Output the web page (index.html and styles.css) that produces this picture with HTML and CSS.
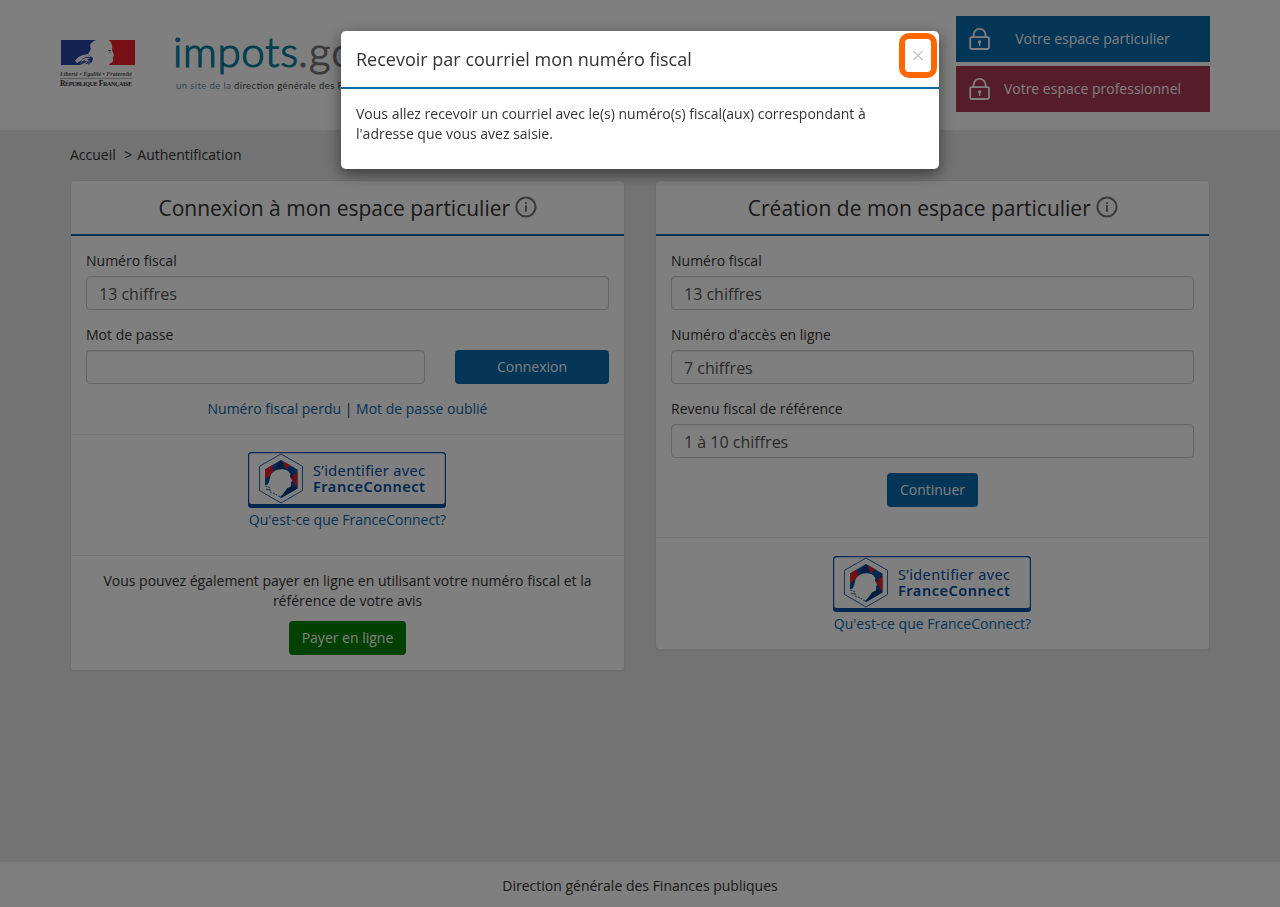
FILE: index.html
```html
<!DOCTYPE html>
<html lang="fr">
<head>
<meta charset="utf-8">
<title>Authentification</title>
<link rel="stylesheet" href="styles.css">
</head>
<body>
<svg class="defs" width="0" height="0">
  <symbol id="lock" viewBox="0 0 22 24">
    <rect x="1.200" y="10.200" width="18.800" height="11.800" rx="1.400" fill="none" stroke="#fff" stroke-width="1.800"/>
    <path d="M4.600 10V7.800a6 6 0 0 1 12 0v2.200" fill="none" stroke="#fff" stroke-width="1.800"/>
    <circle cx="10.600" cy="15" r="1.700" fill="#fff"/><path d="M10.600 15v4" stroke="#fff" stroke-width="1.400"/>
  </symbol>
  <symbol id="info" viewBox="0 0 22 22">
    <circle cx="11" cy="11" r="9.600" fill="none" stroke="#777" stroke-width="2"/>
    <path d="M11 9.300v6.400M11 6.200v1.700" stroke="#777" stroke-width="2"/>
  </symbol>
  <symbol id="fc" viewBox="0 0 198 56">
    <rect width="198" height="56" rx="3.500" fill="#034ea2"/>
    <rect x="1.200" y="1.200" width="195.600" height="50.800" rx="2.500" fill="#fff"/>
    <path d="M33 2L54.500 14.300V38.500L33 51 11.500 38.500V14.300Z" fill="#fff" stroke="#2a65ad" stroke-width="1"/>
    <path d="M33 8L49.500 17.500V36.500L33 46 28 43 17 34V17.500Z" fill="#034ea2"/>
    <path d="M33 8L27 18 37 18Z" fill="#003a80"/>
    <path d="M24 13.200L17 17.500V27L26 21Z" fill="#e1202a"/>
    <path d="M34 9L42.500 13.500 38 17Z" fill="#e1202a"/>
    <path d="M49.500 20V36L42 25Z" fill="#e1202a"/>
    <path d="M44 34L49.500 36.500 33 46 33 39Z" fill="#003a80"/>
    <path d="M26 19.500C29 17 36 16.500 40 19L42.500 22 42 25 44.500 29 43 30 43 34C42 36 39 35 38 38L35 42 31 46 16 38 16 33.500C21 33 21 30 22 26 22 23 24 21 26 19.500Z" fill="#fff"/>
    <path d="M42 20l2 2-1 1.500 3 2" fill="none" stroke="#003a80" stroke-width="1.300"/>
    <path d="M17.500 34l5 2M18 37l2 1 3 0M22 40l2 1M25 41l4 2M30 44l3 1" stroke="#5a88bf" stroke-width="1.300" stroke-dasharray="2 1"/>
    <text x="65" y="23.800" class="fc-text" textLength="112">S’identifier avec</text>
    <text x="65" y="40.200" class="fc-text fc-strong" textLength="112">FranceConnect</text>
  </symbol>
</svg>

<header class="header">
  <div class="container header-row">
    <svg class="logo" width="400" height="60" viewBox="0 0 400 60">
      <path d="M1 5h37v25H1Z" fill="#2b46a5"/>
      <path d="M49 5h26v25H49Z" fill="#ec202b"/>
      <path d="M36 5C31 7 29 10 31 14L28 19 33 23 32 27 27 30H49C50 27 53 28 53 26L53 22 54 20 52 15C53 10 51 6 48 5Z" fill="#fff"/>
      <path d="M15 26C18 21 23 20 28 19L31 22 25 22 31 24 27 24 30 27 24 26 20 29 22 25 17 28ZM20 30L26 27 32 30Z" fill="#fff"/>
      <path d="M22 24l5-2M20 28l5-3M25 28l4 1" stroke="#2b46a5" stroke-width=".8"/>
      <path d="M48 15.500h3M49 17h1.500" stroke="#555" stroke-width=".8"/>
      <text x="0" y="41" class="motto" textLength="72">Liberté • Égalité • Fraternité</text>
      <path d="M0 43.500h72" stroke="#999" stroke-width=".7"/>
      <text x="0" y="51" class="republic" textLength="72">R<tspan font-size="6">ÉPUBLIQUE</tspan> F<tspan font-size="6">RANÇAISE</tspan></text>
      <text x="113" y="32" class="brand" textLength="125">impots</text>
      <text x="238" y="32" class="brand brand-gov" textLength="145">.gouv.fr</text>
      <text x="116" y="54" class="tagline tagline-light" textLength="55">un site de la</text>
      <text x="174" y="54" class="tagline" textLength="190">direction générale des Finances publiques</text>
    </svg>
    <nav class="spaces">
      <a class="space space-part"><svg class="lock"><use href="#lock"/></svg><span>Votre espace particulier</span></a>
      <a class="space space-pro"><svg class="lock"><use href="#lock"/></svg><span>Votre espace professionnel</span></a>
    </nav>
  </div>
</header>

<main class="container main">
  <div class="crumbs"><span>Accueil</span><span class="crumb-sep">&gt;</span><span>Authentification</span></div>
  <div class="columns">
    <section class="panel">
      <h2 class="panel-title">Connexion à mon espace particulier <svg class="info info-near"><use href="#info"/></svg></h2>
      <div class="panel-body">
        <label class="label">Numéro fiscal</label>
        <input class="field" placeholder="13 chiffres">
        <label class="label">Mot de passe</label>
        <div class="password-row"><input class="field" type="password"><button class="btn">Connexion</button></div>
        <p class="links"><a>Numéro fiscal perdu</a> | <a>Mot de passe oublié</a></p>
      </div>
      <div class="connect">
        <svg class="fc"><use href="#fc"/></svg>
        <a>Qu'est-ce que FranceConnect?</a>
      </div>
      <div class="pay">
        <p>Vous pouvez également payer en ligne en utilisant votre numéro fiscal et la référence de votre avis</p>
        <button class="btn btn-pay">Payer en ligne</button>
      </div>
    </section>
    <section class="panel">
      <h2 class="panel-title">Création de mon espace particulier <svg class="info"><use href="#info"/></svg></h2>
      <div class="panel-body create">
        <label class="label">Numéro fiscal</label>
        <input class="field" placeholder="13 chiffres">
        <label class="label">Numéro d'accès en ligne</label>
        <input class="field" placeholder="7 chiffres">
        <label class="label">Revenu fiscal de référence</label>
        <input class="field" placeholder="1 à 10 chiffres">
        <button class="btn btn-next">Continuer</button>
      </div>
      <div class="connect connect-last">
        <svg class="fc"><use href="#fc"/></svg>
        <a>Qu'est-ce que FranceConnect?</a>
      </div>
    </section>
  </div>
</main>
<footer class="footer">Direction générale des Finances publiques</footer>

<div class="backdrop">
  <div class="modal">
    <div class="modal-head">
      <h4>Recevoir par courriel mon numéro fiscal</h4>
      <button class="close"><svg width="12" height="12" viewBox="0 0 12 12"><path d="M1.500 1l9 9M10.500 1l-9 9" stroke="#c8c8c8" stroke-width="1.500"/></svg></button>
    </div>
    <p class="modal-text">Vous allez recevoir un courriel avec le(s) numéro(s) fiscal(aux) correspondant à l'adresse que vous avez saisie.</p>
  </div>
</div>
</body>
</html>
```
FILE: styles.css
```css
* { box-sizing: border-box; }
html, body { height: 100%; }
body {
  margin: 0;
  display: flex;
  flex-direction: column;
  overflow: hidden;
  background: #e6e6e6;
  color: #333;
  font: 14px/20px "Open Sans", sans-serif;
}
p, h2, h4 { margin: 0; font-weight: 400; }
a { color: #0768ae; }
.defs { position: absolute; }
.container { width: 1140px; margin: 0 auto; }

.header { height: 130px; flex: none; background: #fff; }
.header-row { display: flex; justify-content: space-between; padding-top: 16px; }
.logo { margin: 19px 0 0 -10px; overflow: visible; }
.motto { font: italic bold 6px "Liberation Serif", serif; fill: #555; }
.republic { font: bold 7.500px "Liberation Serif", serif; fill: #333; }
.brand { font: 300 42px Lato, sans-serif; fill: #007f9f; stroke: #007f9f; stroke-width: 1.2; }
.brand-gov { fill: #777; stroke: #777; }
.tagline { font: 9.500px Lato, sans-serif; fill: #444; }
.tagline-light { fill: #6c8ba5; }
.spaces { display: flex; flex-direction: column; gap: 4px; }
.space { display: flex; align-items: center; width: 254px; height: 46px; padding: 0 13px; color: #fff; }
.space span { width: 203px; flex: none; text-align: center; }
.space-part { background: #076aae; }
.space-pro { background: #aa3854; }
.lock { width: 22px; height: 24px; flex: none; }

.main { flex: 1; }
.crumbs { display: flex; padding-top: 15px; }
.crumb-sep { margin: 0 5px 0 8.500px; }
.columns { display: grid; grid-template-columns: 555px 555px; gap: 30px; align-items: start; margin-top: 15px; }
.panel { background: #fff; border: 1px solid #ddd; border-radius: 4px; box-shadow: 0 1px 1px rgba(0,0,0,.05); }
.panel-title {
  height: 55px;
  padding-left: 1px;
  border-bottom: 2px solid #076aae;
  font-size: 21px;
  line-height: 54px;
  text-align: center;
}
.info { width: 22px; height: 22px; vertical-align: -2px; }
.info-near { margin: 0 1px 0 -1px; }
.panel-body { height: 198px; padding: 15px 15px 0; }
.create { height: 301px; text-align: center; }
.label { display: block; margin-bottom: 5px; text-align: left; }
.field {
  display: block;
  width: 100%;
  height: 34px;
  margin-bottom: 15px;
  padding: 2px 12px 0;
  border: 1px solid #ccc;
  border-radius: 4px;
  background: #fff;
  box-shadow: inset 0 1px 1px rgba(0,0,0,.075);
  font: 16px "Open Sans", sans-serif;
}
.field::placeholder { color: #555; opacity: 1; }
.password-row { display: grid; grid-template-columns: 339px 154px; gap: 30px; }
.btn {
  height: 34px;
  padding: 0 13px;
  border: 0;
  border-radius: 4px;
  background: #076aae;
  color: #fff;
  font: 14px/20px "Open Sans", sans-serif;
}
.links { text-align: center; }
.connect { height: 121px; padding-top: 17px; border-top: 1px solid #eaeaea; text-align: center; }
.connect-last { height: 112px; padding-top: 18px; }
.connect a { display: block; margin-top: 2px; }
.fc { display: block; width: 198px; height: 56px; margin: 0 auto 0 177px; }
.fc-text { font: 400 14.500px "Noto Sans", "Open Sans", sans-serif; fill: #034ea2; }
.fc-strong { font-weight: 600; }
.pay { height: 115px; padding: 15px; border-top: 1px solid #eaeaea; text-align: center; }
.btn-pay { margin-top: 10px; background: #008000; }

.footer { flex: none; height: 45px; background: #fff; line-height: 48px; text-align: center; }

.backdrop { position: fixed; inset: 0; padding-top: 31px; background: rgba(0,0,0,.5); }
.modal { width: 598px; height: 138px; margin: 0 auto; background: #fff; border-radius: 5px; box-shadow: 0 5px 15px rgba(0,0,0,.5); }
.modal-head { display: flex; justify-content: space-between; height: 58px; padding: 2px 2px 0 15px; border-bottom: 2px solid #0c6dad; }
.modal-head h4 { font-size: 18px; line-height: 52px; }
.close { width: 38px; height: 45px; padding: 0; border: 6px solid #f60; border-radius: 10px; background: none; display: grid; place-items: center; }
.modal-text { padding: 15px; }
```
